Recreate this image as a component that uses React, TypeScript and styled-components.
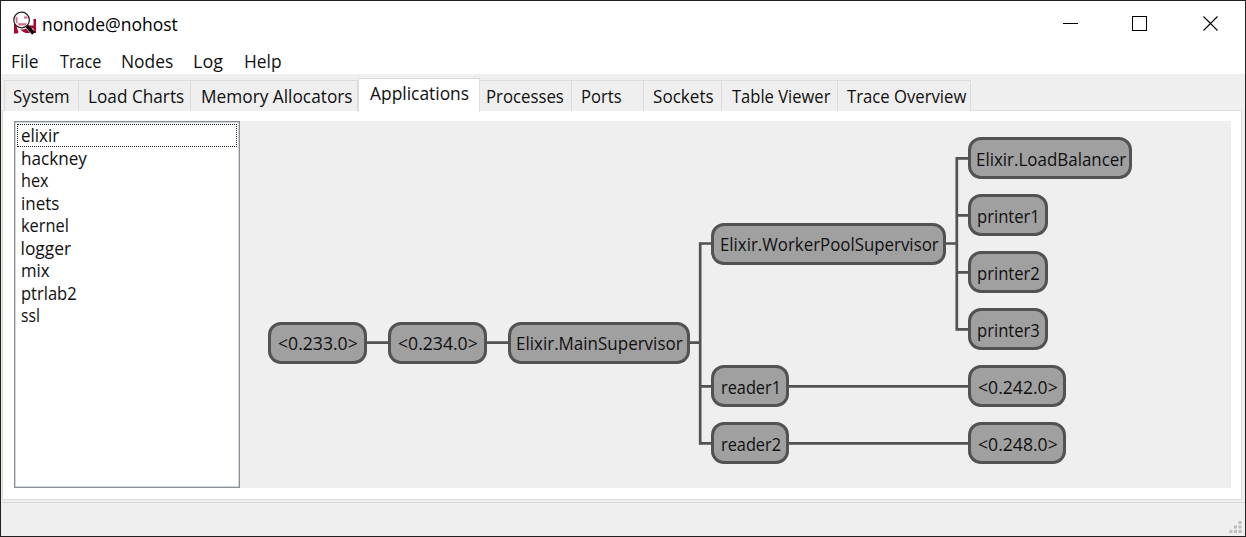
import React, { useLayoutEffect, useRef, useState } from "react";
import styled, { createGlobalStyle } from "styled-components";

const GlobalStyle = createGlobalStyle`
  * { box-sizing: border-box; }
  html, body { margin: 0; padding: 0; overflow: hidden; background: #fff; }
  body { font-family: "Open Sans", "Noto Sans", sans-serif; font-size: 17.4px; line-height: 24px; color: #101010; }
`;

const FitBox = styled.span<{ $w: number }>`
  display: block;
  flex: none;
  width: ${(p) => p.$w}px;
  height: 24px;
  white-space: pre;
`;

const FitInner = styled.span`
  display: inline-block;
  transform-origin: 0 0;
`;

/* Condenses a label horizontally so that it fills the given width. */
function Fit({ width, children }: { width: number; children: string }) {
  const ref = useRef<HTMLSpanElement>(null);
  const [scale, setScale] = useState(1);
  useLayoutEffect(() => {
    if (ref.current) setScale(width / ref.current.offsetWidth);
  }, [width, children]);
  return (
    <FitBox $w={width}>
      <FitInner ref={ref} style={{ transform: `scaleX(${scale})` }}>
        {children}
      </FitInner>
    </FitBox>
  );
}

const Window = styled.div`
  width: 1246px;
  height: 537px;
  display: flex;
  flex-direction: column;
  border: 1px solid #222021;
  background: #efefef;
`;

const TitleBar = styled.header`
  height: 47px;
  flex: none;
  display: flex;
  align-items: flex-start;
  background: #fff;
  padding: 10px 26px 0 12px;
`;

const Title = styled.h1`
  margin: 1px 0 0 4px;
  font-size: 18px;
  font-weight: 400;
  color: #000;
  flex: 1;
`;

const Controls = styled.div`
  display: flex;
  padding-top: 4px;
  gap: 53px;
  & > :last-child { margin-left: 2px; }
`;

const MenuBar = styled.nav`
  height: 26px;
  flex: none;
  display: flex;
  background: #fff;
  padding: 0 0 0 10px;
`;

const MenuItem = styled.div<{ $w: number }>`
  width: ${(p) => p.$w}px;
  flex: none;
  padding-top: 1px;
`;

const TabStrip = styled.div`
  height: 37px;
  flex: none;
  display: flex;
  align-items: flex-end;
  padding-left: 3px;
`;

const Tab = styled.div<{ $w: number; $active?: boolean; $pad: number }>`
  width: ${(p) => p.$w}px;
  height: ${(p) => (p.$active ? 34 : 31)}px;
  margin-bottom: ${(p) => (p.$active ? -1 : 0)}px;
  padding: ${(p) => (p.$active ? 2 : 3)}px 0 0 ${(p) => p.$pad}px;
  border: solid #dcdcdc;
  border-width: ${(p) => (p.$active ? "1px 1px 0 1px" : "1px 1px 0 0")};
  background: ${(p) => (p.$active ? "#fff" : "#efefef")};
  flex: none;
  z-index: ${(p) => (p.$active ? 1 : 0)};
  &:first-child { border-left-width: 1px; }
`;

const Page = styled.main`
  height: 390px;
  flex: none;
  margin: -1px 3px 0 1px;
  border: 1px solid #dcdcdc;
  background: #fff;
  padding: 10px 10px 11px 11px;
  display: flex;
`;

const AppList = styled.ul`
  list-style: none;
  margin: 0;
  padding: 2px;
  width: 226px;
  flex: none;
  border: 1px solid #8b9199;
  box-shadow: inset 0 0 0 0.5px #a5abb2;
`;

const AppRow = styled.li<{ $focused?: boolean }>`
  height: 22.5px;
  padding-left: 3.5px;
  display: flex;
  align-items: center;
  outline: ${(p) => (p.$focused ? "1px dotted #222" : "none")};
  outline-offset: -1px;
`;

const Canvas = styled.div`
  flex: 1;
  position: relative;
  background: #efefef;
`;

const Links = styled.svg`
  position: absolute;
  inset: 0;
  width: 100%;
  height: 100%;
`;

const Node = styled.div<{ $x: number; $y: number; $w: number; $drop: number }>`
  position: absolute;
  left: ${(p) => p.$x}px;
  top: ${(p) => p.$y}px;
  width: ${(p) => p.$w}px;
  height: 42px;
  border: 3px solid #525252;
  border-radius: 13px;
  background: #a0a0a0;
  display: flex;
  justify-content: center;
  padding: ${(p) => p.$drop}px 0 0 1px;
`;

const StatusBar = styled.footer`
  flex: 1;
  margin-top: 2px;
  border-top: 1px solid #d9d9d9;
  display: flex;
  justify-content: flex-end;
  align-items: flex-end;
  padding: 0 3px 3px 0;
`;

const menus: [string, number, number][] = [
  ["File", 28, 49], ["Trace", 41, 61], ["Nodes", 52, 72], ["Log", 30, 51], ["Help", 38, 50],
];

const tabs: { label: string; w: number; text: number; pad: number; active?: boolean }[] = [
  { label: "System", w: 75, text: 57, pad: 8 },
  { label: "Load Charts", w: 112, text: 96, pad: 8.5 },
  { label: "Memory Allocators", w: 167, text: 152, pad: 9.5 },
  { label: "Applications", w: 122, text: 99, pad: 11, active: true },
  { label: "Processes", w: 92, text: 78, pad: 6 },
  { label: "Ports", w: 72, text: 41, pad: 9 },
  { label: "Sockets", w: 78, text: 61, pad: 9 },
  { label: "Table Viewer", w: 116, text: 98, pad: 9.5 },
  { label: "Trace Overview", w: 133, text: 119, pad: 9 },
];

const apps: [string, number][] = [
  ["elixir", 38], ["hackney", 66], ["hex", 28], ["inets", 38], ["kernel", 48],
  ["logger", 51], ["mix", 29], ["ptrlab2", 56], ["ssl", 19],
];

const nodes: { label: string; x: number; y: number; w: number; text: number }[] = [
  { label: "<0.233.0>", x: 28, y: 201, w: 99, text: 80 },
  { label: "<0.234.0>", x: 148, y: 201, w: 99, text: 80 },
  { label: "Elixir.MainSupervisor", x: 268, y: 201, w: 182, text: 167 },
  { label: "Elixir.WorkerPoolSupervisor", x: 471, y: 102, w: 235, text: 219 },
  { label: "Elixir.LoadBalancer", x: 728, y: 16, w: 164, text: 150 },
  { label: "printer1", x: 728, y: 73, w: 80, text: 63 },
  { label: "printer2", x: 728, y: 130, w: 80, text: 63 },
  { label: "printer3", x: 728, y: 187, w: 80, text: 63 },
  { label: "reader1", x: 471, y: 244, w: 78, text: 60 },
  { label: "reader2", x: 471, y: 301, w: 78, text: 60 },
  { label: "<0.242.0>", x: 728, y: 244, w: 98, text: 80 },
  { label: "<0.248.0>", x: 728, y: 301, w: 98, text: 80 },
];

const ObserverIcon = () => (
  <svg width="25" height="26" viewBox="0 0 25 26">
    <path d="M1 8h2c0 6 1 9 2.500 13l-1 1.500H1zM20.500 8H23v14h-2.500v-4.500H18l-2.500-3h5zM7 18c2 1 4 .5 6-.5l4 4.500h-4c-2-.5-4-1.500-6-4z" fill="#a90533" />
    <circle cx="8.600" cy="9" r="7.800" fill="#fff" stroke="#222" strokeWidth="1.200" />
    <path d="M2.500 7.500c0-1 1-2 2-2v6.500h-1.500zM11 5.500h3.500v2H11zM4.500 12.200h9.500l-1.500 2.300H6z" fill="#c53a64" opacity=".75" />
    <path d="M14 15l6.500 7.500" stroke="#090909" strokeWidth="3.600" />
  </svg>
);

export default function App() {
  return (
    <>
      <GlobalStyle />
      <Window>
        <TitleBar>
          <ObserverIcon />
          <Title><Fit width={136}>nonode@nohost</Fit></Title>
          <Controls>
            <svg width="16" height="16"><path d="M0 8.500h15" stroke="#000" /></svg>
            <svg width="16" height="16"><rect x=".5" y="1.500" width="14" height="14" fill="none" stroke="#000" /></svg>
            <svg width="16" height="16"><path d="M.5 1.500l14 14M14.500 1.500L.5 15.500" stroke="#000" strokeWidth="1.100" /></svg>
          </Controls>
        </TitleBar>
        <MenuBar>
          {menus.map(([label, text, w]) => (
            <MenuItem key={label} $w={w}><Fit width={text}>{label}</Fit></MenuItem>
          ))}
        </MenuBar>
        <TabStrip>
          {tabs.map((t) => (
            <Tab key={t.label} $w={t.w} $pad={t.pad} $active={t.active}>
              <Fit width={t.text}>{t.label}</Fit>
            </Tab>
          ))}
        </TabStrip>
        <Page>
          <AppList>
            {apps.map(([name, w], i) => (
              <AppRow key={name} $focused={i === 0}><Fit width={w}>{name}</Fit></AppRow>
            ))}
          </AppList>
          <Canvas>
            <Links fill="none" stroke="#525252" strokeWidth="2.700">
              <path d="M127 221.700h21M247 221.700h21M450 221.700h10.200M471 122.500H460.200V322.300H471M460.200 265.300H471" />
              <path d="M706 122.500h10.800M728 37.300H716.800V208.300H728M716.800 94.300H728M716.800 151.300H728" />
              <path d="M549 265.300H728M549 322.300H728" />
            </Links>
            {nodes.map((n) => (
              <Node key={n.label} $x={n.x} $y={n.y} $w={n.w} $drop={n.y === 201 || n.y === 102 ? 6 : 7}>
                <Fit width={n.text}>{n.label}</Fit>
              </Node>
            ))}
          </Canvas>
        </Page>
        <StatusBar>
          <svg width="13" height="13" fill="#bdbdbd">
            <path d="M9.500 1h3v3h-3zM5 5.500h3v3H5zM9.500 5.500h3v3h-3zM.5 10h3v3h-3zM5 10h3v3H5zM9.500 10h3v3h-3z" />
          </svg>
        </StatusBar>
      </Window>
    </>
  );
}
